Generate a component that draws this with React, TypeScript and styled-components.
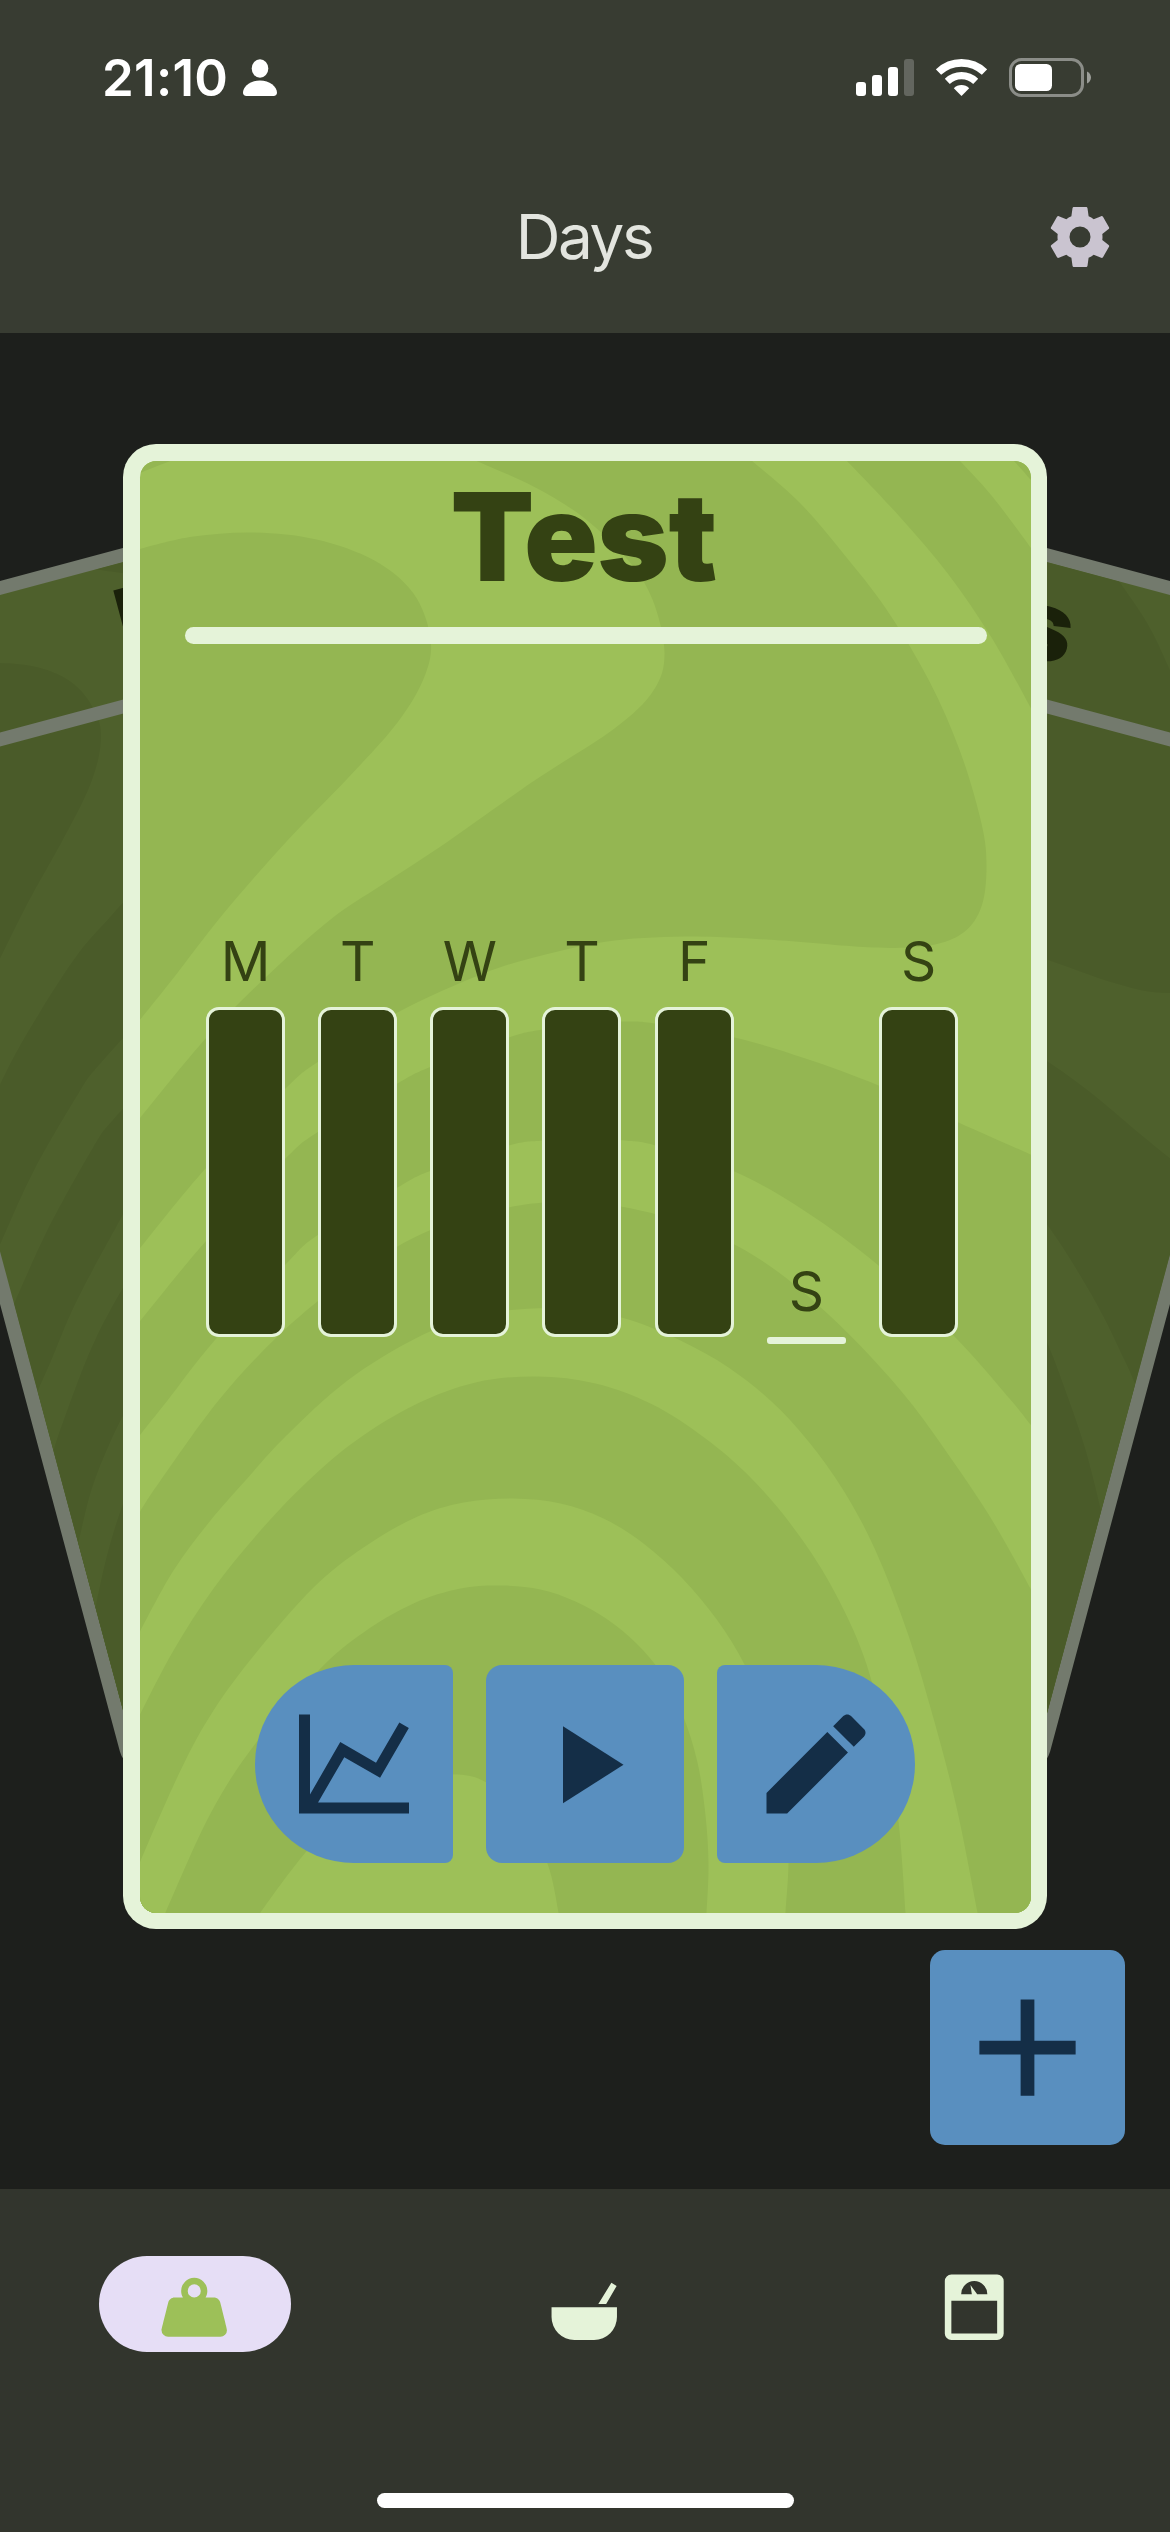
import React from 'react';
import styled, { createGlobalStyle } from 'styled-components';

const color = {
  header: '#383c32',
  body: '#1d1f1c',
  nav: '#32352d',
  frame: '#e5f3d9',
  leaf: '#9dc058',
  moss: '#94b652',
  ink: '#344213',
  action: '#598fbf',
  actionInk: '#142e47',
  pill: '#e6def6',
};

const GlobalStyle = createGlobalStyle`
  *, *::before, *::after { box-sizing: border-box; }
  body {
    margin: 0;
    background: ${color.body};
    font-family: Inter, "Liberation Sans", sans-serif;
    -webkit-font-smoothing: antialiased;
  }
  svg { display: block; }
`;

const Screen = styled.div`
  display: flex;
  flex-direction: column;
  width: 1170px;
  height: 2532px;
  overflow: hidden;
  background: ${color.body};
`;

/* ---------- header ---------- */

const Header = styled.header`
  flex: none;
  height: 333px;
  background: ${color.header};
`;

const StatusBar = styled.div`
  display: flex;
  align-items: center;
  justify-content: space-between;
  height: 141px;
  padding: 14px 79px 0 102px;
  color: #fff;
`;

const StatusGroup = styled.div<{ $gap: number }>`
  display: flex;
  align-items: center;
  gap: ${(p) => p.$gap}px;
`;

const Clock = styled.span`
  font-size: 51px;
  font-weight: 600;
  line-height: 60px;
  letter-spacing: 0.3px;
`;

const AppBar = styled.div`
  display: grid;
  grid-template-columns: 1fr auto 1fr;
  align-items: center;
  height: 192px;
  padding: 0 54px;
`;

const AppTitle = styled.h1`
  grid-column: 2;
  margin: 0;
  padding-right: 2px;
  font-size: 62px;
  font-weight: 400;
  line-height: 80px;
  letter-spacing: -2.4px;
  color: #e3e5df;
`;

const SettingsButton = styled.button`
  justify-self: end;
  padding: 0;
  border: 0;
  background: none;
  color: #cac4d0;
`;

/* ---------- card deck ---------- */

const Deck = styled.main`
  flex: none;
  display: grid;
  grid-template: 1856px / 1170px;
  overflow: hidden;
`;

const Frame = styled.article<{ $side?: -1 | 1 }>`
  grid-area: 1 / 1;
  justify-self: center;
  width: 924px;
  height: 1485px;
  margin-top: 111px;
  padding: 16.5px;
  border-radius: 33px;
  background: ${color.frame};
  ${(p) =>
    p.$side
      ? `transform: translate(${p.$side * 255}px, -79px) rotate(${p.$side * 15}deg) scale(0.8);
         filter: brightness(0.5);`
      : 'z-index: 1;'}
`;

const Face = styled.div`
  display: grid;
  grid-template: 1452px / 891px;
  overflow: hidden;
  border-radius: 16.5px;
  background: ${color.leaf};
`;

const Pattern = styled.svg`
  grid-area: 1 / 1;
  width: 891px;
  height: 1452px;
`;

const Content = styled.div`
  grid-area: 1 / 1;
  z-index: 1;
  display: flex;
  flex-direction: column;
`;

const CardTitle = styled.h2`
  margin: 0 3px 15px 0;
  font-size: 122px;
  font-weight: 900;
  line-height: 151.5px;
  letter-spacing: -0.7px;
  text-align: center;
  color: ${color.ink};
`;

const Divider = styled.div`
  flex: none;
  height: 17px;
  margin: 0 44px 0 45px;
  border-radius: 8.5px;
  background: ${color.frame};
`;

const Week = styled.div`
  display: flex;
  align-items: flex-end;
  gap: 33.2px;
  height: 693px;
  padding-left: 66.3px;
`;

const Day = styled.div<{ $empty: boolean }>`
  display: flex;
  flex-direction: column;
  align-items: center;
  gap: 26px;
  width: 79px;
  margin-bottom: ${(p) => (p.$empty ? -7 : 0)}px;
`;

const DayLabel = styled.span`
  font-size: 55px;
  line-height: 40px;
  letter-spacing: -0.5px;
  color: ${color.ink};
`;

const DayBar = styled.div<{ $filled: boolean }>`
  width: 79px;
  height: ${(p) => (p.$filled ? 330 : 7)}px;
  border: 3px solid ${color.frame};
  border-radius: ${(p) => (p.$filled ? 13 : 3)}px;
  background: ${(p) => (p.$filled ? color.ink : color.frame)};
`;

const Actions = styled.div`
  display: flex;
  justify-content: center;
  gap: 33px;
  margin-top: 328px;
`;

const ActionButton = styled.button<{ $radius: string }>`
  display: grid;
  place-items: center;
  width: 198px;
  height: 198px;
  padding: 0;
  border: 0;
  border-radius: ${(p) => p.$radius};
  background: ${color.action};
  color: ${color.actionInk};
`;

const AddButton = styled.button`
  grid-area: 1 / 1;
  z-index: 2;
  place-self: end;
  display: grid;
  place-items: center;
  width: 195px;
  height: 195px;
  margin: 0 45px 44px 0;
  padding: 0;
  border: 0;
  border-radius: 15px;
  background: ${color.action};
  color: ${color.actionInk};
`;

/* ---------- bottom navigation ---------- */

const NavBar = styled.nav`
  flex: none;
  display: flex;
  flex-direction: column;
  align-items: center;
  height: 343px;
  padding: 67px 0 24px;
  background: ${color.nav};
`;

const NavItems = styled.div`
  display: grid;
  grid-template-columns: repeat(3, 390px);
  justify-items: center;
`;

const NavItem = styled.button<{ $active?: boolean }>`
  display: grid;
  place-items: center;
  width: 192px;
  height: 96px;
  padding: 7.4px 2px 0 0;
  border: 0;
  border-radius: 48px;
  background: ${(p) => (p.$active ? color.pill : 'transparent')};
  color: ${(p) => (p.$active ? color.leaf : color.frame)};
`;

const HomeIndicator = styled.div`
  width: 417px;
  height: 15px;
  margin-top: auto;
  border-radius: 8px;
  background: #fff;
`;

/* ---------- drawings ---------- */

const icons = {
  cog: 'M12,15.5A3.5,3.5 0 0,1 8.5,12A3.5,3.5 0 0,1 12,8.5A3.5,3.5 0 0,1 15.5,12A3.5,3.5 0 0,1 12,15.5M19.43,12.97C19.47,12.65 19.5,12.33 19.5,12C19.5,11.67 19.47,11.34 19.43,11L21.54,9.37C21.73,9.22 21.78,8.95 21.66,8.73L19.66,5.27C19.54,5.05 19.27,4.96 19.05,5.05L16.56,6.05C16.04,5.66 15.5,5.32 14.87,5.07L14.5,2.42C14.46,2.18 14.25,2 14,2H10C9.75,2 9.54,2.18 9.5,2.42L9.13,5.07C8.5,5.32 7.96,5.66 7.44,6.05L4.95,5.05C4.73,4.96 4.46,5.05 4.34,5.27L2.34,8.73C2.21,8.95 2.27,9.22 2.46,9.37L4.57,11C4.53,11.34 4.5,11.67 4.5,12C4.5,12.33 4.53,12.65 4.57,12.97L2.46,14.63C2.27,14.78 2.21,15.05 2.34,15.27L4.34,18.73C4.46,18.95 4.73,19.03 4.95,18.95L7.44,17.94C7.96,18.34 8.5,18.68 9.13,18.93L9.5,21.58C9.54,21.82 9.75,22 10,22H14C14.25,22 14.46,21.82 14.5,21.58L14.87,18.93C15.5,18.67 16.04,18.34 16.56,17.94L19.05,18.95C19.27,19.03 19.54,18.95 19.66,18.73L21.66,15.27C21.78,15.05 21.73,14.78 21.54,14.63L19.43,12.97Z',
  chart: 'M16,11.78L20.24,4.45L21.97,5.45L16.74,14.5L10.23,10.75L5.46,19H22V21H2V3H4V17.54L9.5,8L16,11.78Z',
  play: 'M8,5.14V19.14L19,12.14L8,5.14Z',
  pencil: 'M20.71,7.04C21.1,6.65 21.1,6 20.71,5.63L18.37,3.29C18,2.9 17.35,2.9 16.96,3.29L15.12,5.12L18.87,8.87M3,17.25V21H6.75L17.81,9.93L14.06,6.18L3,17.25Z',
  plus: 'M19,13H13V19H11V13H5V11H11V5H13V11H19V13Z',
  weight: 'M12,3A4,4 0 0,1 16,7C16,7.73 15.81,8.41 15.46,9H18C18.95,9 19.75,9.67 19.95,10.56C21.96,18.57 22,18.78 22,19A2,2 0 0,1 20,21H4A2,2 0 0,1 2,19C2,18.78 2.04,18.57 4.05,10.56C4.25,9.67 5.05,9 6,9H8.54C8.19,8.41 8,7.73 8,7A4,4 0 0,1 12,3M12,5A2,2 0 0,0 10,7A2,2 0 0,0 12,9A2,2 0 0,0 14,7A2,2 0 0,0 12,5Z',
  bowl: 'M22,12V15A7,7 0 0,1 15,22H9A7,7 0 0,1 2,15V12H22M20.3,4.5L21.9,5.5L18.7,11H16.3L20.3,4.5Z',
  scale: 'M5,2H19A2,2 0 0,1 21,4V20A2,2 0 0,1 19,22H5A2,2 0 0,1 3,20V4A2,2 0 0,1 5,2M12,4A4,4 0 0,0 8,8H11.26L10.85,5.23L12.9,8H16A4,4 0 0,0 12,4M5,10V20H19V10H5Z',
};

const Icon = ({ name, size }: { name: keyof typeof icons; size: number }) => (
  <svg width={size} height={size} viewBox="0 0 24 24" fill="currentColor" fillRule="evenodd">
    <path d={icons[name]} />
  </svg>
);

const PersonIcon = () => (
  <svg width="34" height="37" viewBox="0 0 34 37" fill="currentColor">
    <ellipse cx="17" cy="9.5" rx="8.3" ry="9.2" />
    <path d="M17 21.5c9.5 0 17 6 17 12.3 0 2-1.200 3.200-3.600 3.200H3.600C1.200 37 0 35.800 0 33.800 0 27.500 7.500 21.500 17 21.500z" />
  </svg>
);

const SignalIcon = () => (
  <svg width="58" height="37" viewBox="0 0 58 37" fill="currentColor">
    <rect x="0" y="23" width="10" height="14" rx="3" />
    <rect x="16" y="16" width="10" height="21" rx="3" />
    <rect x="32" y="8" width="10" height="29" rx="3" />
    <rect x="48" y="0" width="10" height="37" rx="3" opacity="0.22" />
  </svg>
);

const WifiIcon = () => (
  <svg width="51" height="37" viewBox="0 0 51 37" fill="none" stroke="currentColor">
    <path d="M2.500 13.100A33.200 33.200 0 0 1 48.500 13.100" strokeWidth="7.600" />
    <path d="M11.300 22.300A20.500 20.500 0 0 1 39.700 22.300" strokeWidth="7.200" />
    <path d="M25.500 37L17.800 29.200A10.800 10.800 0 0 1 33.200 29.200Z" fill="currentColor" stroke="none" />
  </svg>
);

const BatteryIcon = () => (
  <svg width="82" height="39" viewBox="0 0 82 39" fill="none">
    <rect x="1.500" y="1.500" width="72" height="36" rx="11" stroke="#fff" strokeOpacity="0.42" strokeWidth="3" />
    <rect x="6" y="6" width="37" height="27" rx="5.500" fill="#fff" />
    <path d="M78 13.500c2.500 1 4 3.500 4 6s-1.500 5-4 6z" fill="#fff" fillOpacity="0.5" />
  </svg>
);

type Point = [number, number];

/* Catmull-Rom spline through the points, written as cubic segments. */
const curve = (points: Point[]) =>
  points
    .slice(1)
    .map((end, i) => {
      const start = points[i];
      const before = points[i - 1] ?? start;
      const after = points[i + 2] ?? end;
      const c1 = [start[0] + (end[0] - before[0]) / 6, start[1] + (end[1] - before[1]) / 6];
      const c2 = [end[0] - (after[0] - start[0]) / 6, end[1] - (after[1] - start[1]) / 6];
      return `C${c1.join()} ${c2.join()} ${end.join()}`;
    })
    .join('');

const corner: Point[] = [[130, 478], [141, 472], [158, 465], [182, 456]];

const blob: Point[] = [
  [130, 553], [141, 548], [193, 536], [254, 532], [316, 539], [374, 560], [413, 593], [430, 638],
  [424, 676], [397, 722], [347, 778], [286, 841], [223, 913], [171, 980], [130, 1031],
];

const bandLeft: Point[] = [
  [465, 455], [475, 460], [533, 486], [583, 517], [627, 559], [652, 599], [664, 652], [653, 690],
  [614, 728], [534, 780], [446, 842], [382, 884], [330, 919], [264, 978], [206, 1037], [140, 1117], [125, 1137],
];

const bandRight: Point[] = [
  [125, 1265], [140, 1247], [206, 1167], [285, 1088], [318, 1061], [397, 1012], [483, 973], [545, 954],
  [614, 940], [694, 936], [780, 940], [873, 947], [929, 945], [963, 932], [981, 906], [986, 866],
  [981, 823], [960, 752], [929, 681], [886, 609], [842, 552], [799, 502], [751, 460], [745, 455],
];

const stripe: Point[] = [[840, 455], [846, 460], [899, 516], [948, 574], [991, 637], [1030, 707], [1036, 720]];
const stripeInner: Point[] = [[1036, 558], [1030, 547], [991, 495], [959, 460], [954, 455]];
const cornerRight: Point[] = [[1007, 455], [1013, 460], [1030, 479], [1036, 487]];

/* Hills are stacked back to front, alternating dark and light. */
const hills: Point[][] = [
  [
    [125, 1338], [140, 1320], [206, 1240], [285, 1158], [318, 1131], [397, 1083], [431, 1066], [508, 1037],
    [542, 1029], [583, 1023], [624, 1021], [655, 1023], [734, 1037], [805, 1058], [878, 1085], [958, 1122],
    [1030, 1154], [1045, 1161],
  ],
  [
    [125, 1456], [140, 1434], [167, 1400], [214, 1340], [285, 1264], [318, 1234], [397, 1187], [431, 1170],
    [508, 1145], [542, 1140], [583, 1137], [624, 1140], [655, 1145], [734, 1171], [805, 1211], [878, 1265],
    [954, 1336], [1009, 1398], [1030, 1424], [1045, 1444],
  ],
  [
    [125, 1536], [139, 1512], [160, 1480], [218, 1400], [276, 1337], [335, 1287], [397, 1246], [450, 1222],
    [508, 1207], [545, 1202], [583, 1202], [620, 1206], [660, 1215], [700, 1228], [745, 1250], [785, 1277],
    [828, 1314], [870, 1356], [910, 1402], [945, 1450], [990, 1517], [1030, 1588], [1045, 1618],
  ],
  [
    [125, 1660], [139, 1632], [173, 1570], [210, 1520], [245, 1480], [285, 1436], [347, 1380], [415, 1338],
    [475, 1315], [533, 1308], [580, 1309], [628, 1319], [680, 1340], [728, 1367], [771, 1401], [808, 1441],
    [843, 1490], [875, 1550], [908, 1635], [935, 1725], [957, 1811], [977, 1912], [981, 1935],
  ],
  [
    [125, 1745], [139, 1715], [173, 1650], [213, 1588], [260, 1530], [308, 1480], [357, 1439], [415, 1404],
    [475, 1382], [536, 1376], [595, 1383], [652, 1404], [705, 1438], [750, 1477], [792, 1526], [830, 1584],
    [863, 1655], [885, 1738], [898, 1821], [905, 1912], [906, 1935],
  ],
  [
    [125, 1900], [139, 1863], [180, 1770], [213, 1710], [255, 1653], [313, 1587], [363, 1547], [415, 1517],
    [463, 1502], [513, 1498], [560, 1503], [603, 1518], [643, 1543], [682, 1578], [717, 1620], [744, 1664],
    [765, 1714], [779, 1770], [786, 1820], [788, 1863], [785, 1912], [784, 1935],
  ],
  [
    [156, 1935], [165, 1912], [210, 1813], [255, 1743], [318, 1670], [363, 1632], [413, 1603], [460, 1588],
    [502, 1585], [540, 1589], [575, 1601], [607, 1619], [636, 1643], [661, 1673], [682, 1714], [697, 1762],
    [705, 1815], [708, 1864], [706, 1912], [704, 1935],
  ],
  [
    [246, 1935], [260, 1912], [305, 1852], [350, 1806], [400, 1781], [453, 1774], [486, 1782], [522, 1812],
    [547, 1863], [558, 1912], [561, 1935],
  ],
];

const HillsPattern = () => (
  <Pattern viewBox="139.500 460.500 891 1452" aria-hidden>
    <g fill={color.moss}>
      <path d={`M130,450L130,478${curve(corner)}Z`} />
      <path d={`M${blob[0].join()}${curve(blob)}Z`} />
      <path
        d={`M${bandLeft[0].join()}${curve(bandLeft)}L${bandRight[0].join()}${curve(bandRight)}Z`}
      />
      <path
        d={`M${stripe[0].join()}${curve(stripe)}L${stripeInner[0].join()}${curve(stripeInner)}Z`}
      />
      <path d={`M${cornerRight[0].join()}${curve(cornerRight)}L1036,455Z`} />
    </g>
    {hills.map((points, i) => {
      const first = points[0];
      const last = points[points.length - 1];
      return (
        <path
          key={i}
          fill={i % 2 ? color.leaf : color.moss}
          d={`M${first.join()}${curve(points)}L${last[0]},1940L${first[0]},1940Z`}
        />
      );
    })}
  </Pattern>
);

/* ---------- screen ---------- */

const week = [
  { label: 'M', done: true },
  { label: 'T', done: true },
  { label: 'W', done: true },
  { label: 'T', done: true },
  { label: 'F', done: true },
  { label: 'S', done: false },
  { label: 'S', done: true },
];

const PlanCard = ({
  title,
  side,
  children,
}: {
  title: string;
  side?: -1 | 1;
  children?: React.ReactNode;
}) => (
  <Frame $side={side}>
    <Face>
      <HillsPattern />
      <Content>
        <CardTitle>{title}</CardTitle>
        <Divider />
        {children}
      </Content>
    </Face>
  </Frame>
);

export default function App() {
  return (
    <>
      <GlobalStyle />
      <Screen>
        <Header>
          <StatusBar>
            <StatusGroup $gap={14.5}>
              <Clock>21:10</Clock>
              <PersonIcon />
            </StatusGroup>
            <StatusGroup $gap={22}>
              <SignalIcon />
              <WifiIcon />
              <BatteryIcon />
            </StatusGroup>
          </StatusBar>
          <AppBar>
            <AppTitle>Days</AppTitle>
            <SettingsButton aria-label="Settings">
              <Icon name="cog" size={72} />
            </SettingsButton>
          </AppBar>
        </Header>

        <Deck>
          <PlanCard title="Lift" side={-1} />
          <PlanCard title="Lats" side={1} />
          <PlanCard title="Test">
            <Week>
              {week.map((day, i) => (
                <Day key={i} $empty={!day.done}>
                  <DayLabel>{day.label}</DayLabel>
                  <DayBar $filled={day.done} />
                </Day>
              ))}
            </Week>
            <Actions>
              <ActionButton $radius="99px 8px 8px 99px" aria-label="Statistics">
                <Icon name="chart" size={132} />
              </ActionButton>
              <ActionButton $radius="16px" aria-label="Start">
                <Icon name="play" size={132} />
              </ActionButton>
              <ActionButton $radius="8px 99px 99px 8px" aria-label="Edit">
                <Icon name="pencil" size={132} />
              </ActionButton>
            </Actions>
          </PlanCard>
          <AddButton aria-label="Add">
            <Icon name="plus" size={165} />
          </AddButton>
        </Deck>

        <NavBar>
          <NavItems>
            <NavItem $active aria-label="Training">
              <Icon name="weight" size={78.5} />
            </NavItem>
            <NavItem aria-label="Food">
              <Icon name="bowl" size={78.5} />
            </NavItem>
            <NavItem aria-label="Body">
              <Icon name="scale" size={78.5} />
            </NavItem>
          </NavItems>
          <HomeIndicator />
        </NavBar>
      </Screen>
    </>
  );
}
